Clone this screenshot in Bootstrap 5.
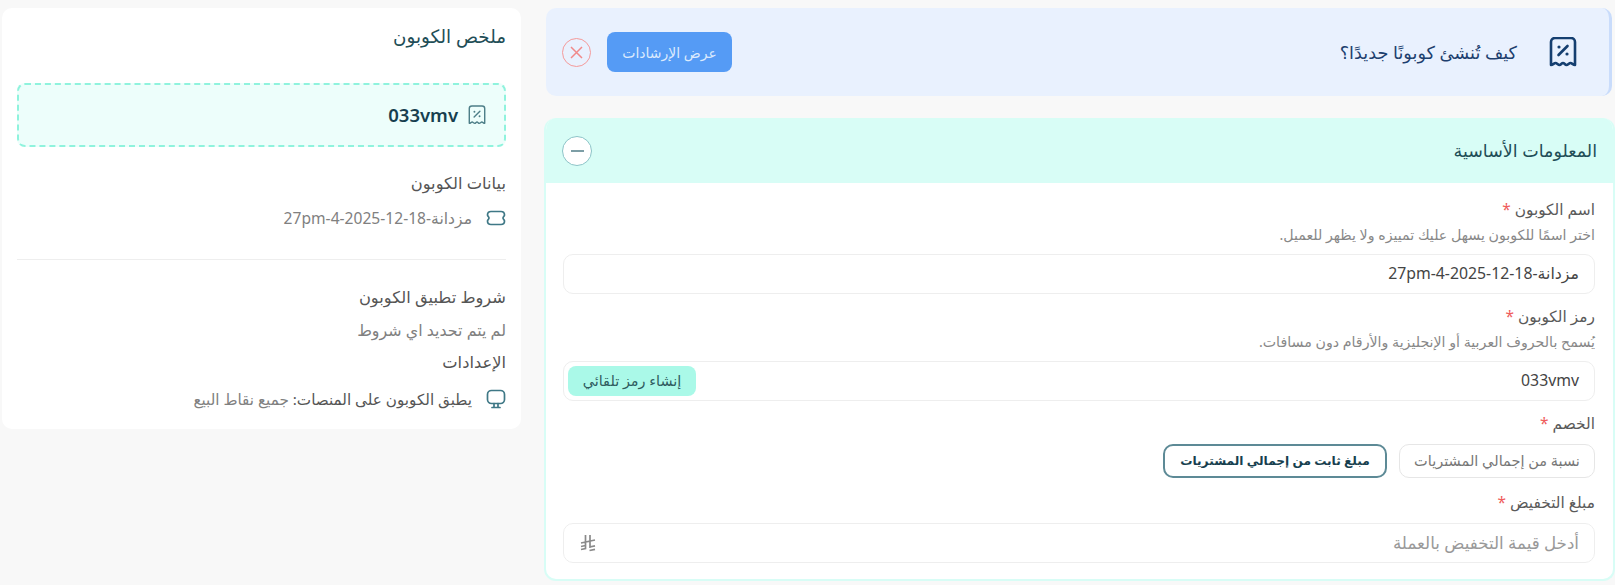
<!doctype html>
<html lang="ar" dir="rtl">
<head>
<meta charset="utf-8">
<title>ملخص الكوبون</title>
<link href="https://cdn.jsdelivr.net/npm/bootstrap@5.3.0/dist/css/bootstrap.min.css" rel="stylesheet">
<style>
html,body{height:585px;overflow:hidden}
body{background:#f8f8f8;font-family:"Noto Sans","DejaVu Sans",sans-serif;color:#333;font-size:14px;text-align:right}
.page-wrap{display:flex;gap:23px;padding:8px 0 0 2px}
.main-col{width:1071px;flex:none;display:flex;flex-direction:column;gap:22px}
.side-col{width:519px;flex:none;background:#fff;border-radius:10px;padding:16px 15px 0 15px;height:421px}
.guide{height:88px;margin:0 3px 0 2px;background:#e9f1fe;border-right:3px solid #c9dcfb;border-radius:10px;display:flex;align-items:center;padding:0 32px 0 16px}
.guide-title{font-size:17.7px;color:#1d3f6e;margin-right:32px}
.guide-btn{background:#559bf5;color:#dceafd;border:0;border-radius:8px;width:125px;height:40px;font-size:14px;margin-left:16px}
.close-ring{width:29px;height:29px;border:1.5px solid #f59a9a;border-radius:50%;display:flex;align-items:center;justify-content:center}
.basic{background:#fff;border:2px solid #d8fdf6;border-top:0;border-radius:12px;height:463px;overflow:hidden}
.basic-head{height:65px;margin:0 -2px;background:#d8fdf6;display:flex;align-items:center;justify-content:space-between;padding:0 18px;font-size:17.5px;color:#1f4e57}
.minus-ring{width:30px;height:30px;background:#fff;border:1.5px solid #8cc4c8;border-radius:50%;display:flex;align-items:center;justify-content:center}
.minus-ring i{display:block;width:13px;height:2px;background:#7d9ea6}
.basic-body{padding:17px 18px 0 17px}
.fld-label{font-size:15.4px;color:#5a5a5a;line-height:20px;margin:0}
.fld-label b{color:#ef5c5c;font-weight:400}
.fld-help{font-size:14.2px;color:#888;line-height:18px;margin:6px 0 10px}
.fld-input{height:40px;border:1px solid #eee;border-radius:10px;display:flex;align-items:center;justify-content:space-between;padding:0 15px 0 4px;margin-bottom:13px;color:#444}
.fld-input span{font-size:15.8px}
.fld-input .hint{font-size:16.7px;color:#999}
.auto-btn{background:#aaf9e8;color:#2f5c5f;border:0;border-radius:8px;width:128px;height:30px;font-size:14.4px;padding:0}
.choice{display:flex;gap:12px;margin:10px 0 15px}
.choice button{height:34px;background:#fff;border:1px solid #e6e6e6;border-radius:10px;color:#777;font-size:14.5px;width:196px;padding:0}
.choice button.on{width:224px;border:2px solid #5d8a96;color:#173f4f;font-weight:700;font-size:12.2px}
.amt-box{margin-top:10px}
.sar{margin-left:12px}
.side-title{font-size:18.3px;color:#1f4e57;line-height:24px;margin-bottom:35px}
.code-box{height:64px;background:#edfefb;border:2px dashed #8ff3dd;border-radius:8px;display:flex;align-items:center;padding:0 18px;gap:10px;font-size:18.5px;font-weight:600;color:#173f4f;margin-bottom:24px}
.side-h{font-size:16.3px;color:#555;line-height:24px;margin:0}
.side-row{display:flex;align-items:center;gap:14px;color:#808080;font-size:15.6px;line-height:24px}
.row-gap{margin-top:11px}
.side-rule{border-top:1px solid #eee;margin:29px 0 25px}
.terms-txt{margin-top:9px;font-size:15.9px}
.set-h{margin-top:8px}
.set-row{font-size:15.2px;margin-top:13px}
.strong-part{color:#555}
</style>
</head>
<body>
<div class="page-wrap">
  <div class="main-col">
    <div class="guide">
      <svg width="28" height="30" viewBox="0 0 28 30" fill="none" stroke="#153f70" stroke-width="2.600" stroke-linecap="round" stroke-linejoin="round"><path d="M2 5a4 4 0 0 1 4-4h16a4 4 0 0 1 4 4v23c-2 0-3-2-4.500-2s-2.500 2-4 2-2-2-3.500-2-2 2-3.500 2-2.500-2-4-2-2.500 2-4.500 2z"/><path d="M9.500 18l9-9"/><path d="M10 10h.01M18 17h.01" stroke-width="3.200"/></svg>
      <div class="guide-title">كيف تُنشئ كوبونًا جديدًا؟</div>
      <div class="flex-grow-1"></div>
      <button class="guide-btn">عرض الإرشادات</button>
      <div class="close-ring"><svg width="15" height="15" viewBox="0 0 15 15" stroke="#f08a8a" stroke-width="1.500"><path d="M2 2l11 11M13 2L2 13"/></svg></div>
    </div>
    <div class="basic">
      <div class="basic-head"><span>المعلومات الأساسية</span><span class="minus-ring"><i></i></span></div>
      <div class="basic-body">
        <p class="fld-label">اسم الكوبون <b>*</b></p>
        <p class="fld-help">اختر اسمًا للكوبون يسهل عليك تمييزه ولا يظهر للعميل.</p>
        <div class="fld-input"><span>مزدانة-18-12-2025-4-27pm</span></div>
        <p class="fld-label">رمز الكوبون <b>*</b></p>
        <p class="fld-help">يُسمح بالحروف العربية أو الإنجليزية والأرقام دون مسافات.</p>
        <div class="fld-input"><span>033vmv</span><button class="auto-btn">إنشاء رمز تلقائي</button></div>
        <p class="fld-label">الخصم <b>*</b></p>
        <div class="choice"><button>نسبة من إجمالي المشتريات</button><button class="on">مبلغ ثابت من إجمالي المشتريات</button></div>
        <p class="fld-label">مبلغ التخفيض <b>*</b></p>
        <div class="fld-input amt-box"><span class="hint">أدخل قيمة التخفيض بالعملة</span><svg class="sar" width="16" height="18" viewBox="0 0 16 18" fill="none" stroke="#8a8a8a" stroke-width="1.700"><path d="M5.500 1v13.500L1 15.500M10 1v13M1 9l14-3M1 12.500l4.500-1M9.500 13l5.500-1.200M9.500 16.500l5.500-1.200"/></svg></div>
      </div>
    </div>
  </div>
  <div class="side-col">
    <div class="side-title">ملخص الكوبون</div>
    <div class="code-box">
      <svg width="18" height="20" viewBox="0 0 28 30" fill="none" stroke="#4e7f88" stroke-width="2.200" stroke-linecap="round" stroke-linejoin="round"><path d="M2 5a4 4 0 0 1 4-4h16a4 4 0 0 1 4 4v23c-2 0-3-2-4.500-2s-2.500 2-4 2-2-2-3.500-2-2 2-3.500 2-2.500-2-4-2-2.500 2-4.500 2z"/><path d="M9.500 18l9-9"/><path d="M10 10h.01M18 17h.01" stroke-width="3"/></svg>
      <span>033vmv</span>
    </div>
    <p class="side-h">بيانات الكوبون</p>
    <div class="side-row row-gap"><svg width="20" height="16" viewBox="0 0 20 16" fill="none" stroke="#3f7886" stroke-width="1.700"><path d="M5 1.500H15C17 1.500 18.500 3 18.500 5C18.500 6.200 17 6.500 17 8C17 9.500 18.500 9.800 18.500 11C18.500 13 17 14.500 15 14.500H5C3 14.500 1.500 13 1.500 11C1.500 9.800 3 9.500 3 8C3 6.500 1.500 6.200 1.500 5C1.500 3 3 1.500 5 1.500Z"/></svg><span>مزدانة-18-12-2025-4-27pm</span></div>
    <div class="side-rule"></div>
    <p class="side-h">شروط تطبيق الكوبون</p>
    <div class="side-row terms-txt">لم يتم تحديد اي شروط</div>
    <p class="side-h set-h">الإعدادات</p>
    <div class="side-row set-row"><svg width="20" height="20" viewBox="0 0 20 20" fill="none" stroke="#3f7886" stroke-width="1.700" stroke-linecap="round"><rect x="1.500" y="1.500" width="17" height="13" rx="4"/><path d="M8 14.500v4M12 14.500v4M6 18.500h8"/></svg><span><span class="strong-part">يطبق الكوبون على المنصات:</span> جميع نقاط البيع</span></div>
  </div>
</div>
<script src="https://cdn.jsdelivr.net/npm/bootstrap@5.3.0/dist/js/bootstrap.bundle.min.js"></script>
</body>
</html>
